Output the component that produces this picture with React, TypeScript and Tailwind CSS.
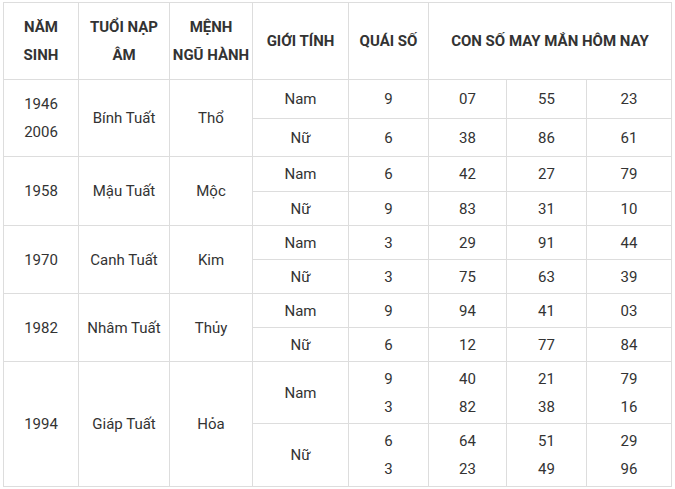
import React from "react";

type Sub = { g: string; q: string[]; n: string[][] };
type Row = { year: string[]; tuoi: string; menh: string; subs: Sub[]; h: string[] };

const rows: Row[] = [
  {
    year: ["1946", "2006"],
    tuoi: "Bính Tuất",
    menh: "Thổ",
    h: ["h-[39px]", "h-[38px]"],
    subs: [
      { g: "Nam", q: ["9"], n: [["07"], ["55"], ["23"]] },
      { g: "Nữ", q: ["6"], n: [["38"], ["86"], ["61"]] },
    ],
  },
  {
    year: ["1958"],
    tuoi: "Mậu Tuất",
    menh: "Mộc",
    h: ["h-[35px]", "h-[34px]"],
    subs: [
      { g: "Nam", q: ["6"], n: [["42"], ["27"], ["79"]] },
      { g: "Nữ", q: ["9"], n: [["83"], ["31"], ["10"]] },
    ],
  },
  {
    year: ["1970"],
    tuoi: "Canh Tuất",
    menh: "Kim",
    h: ["h-[34px]", "h-[34px]"],
    subs: [
      { g: "Nam", q: ["3"], n: [["29"], ["91"], ["44"]] },
      { g: "Nữ", q: ["3"], n: [["75"], ["63"], ["39"]] },
    ],
  },
  {
    year: ["1982"],
    tuoi: "Nhâm Tuất",
    menh: "Thủy",
    h: ["h-[34px]", "h-[34px]"],
    subs: [
      { g: "Nam", q: ["9"], n: [["94"], ["41"], ["03"]] },
      { g: "Nữ", q: ["6"], n: [["12"], ["77"], ["84"]] },
    ],
  },
  {
    year: ["1994"],
    tuoi: "Giáp Tuất",
    menh: "Hỏa",
    h: ["h-[62px]", "h-[63px]"],
    subs: [
      { g: "Nam", q: ["9", "3"], n: [["40", "82"], ["21", "38"], ["79", "16"]] },
      { g: "Nữ", q: ["6", "3"], n: [["64", "23"], ["51", "49"], ["29", "96"]] },
    ],
  },
];

const cell = "border border-[#dddddd] text-center align-middle p-0";

function Lines({ items }: { items: string[] }) {
  return (
    <>
      {items.map((t, i) => (
        <div key={i}>{t}</div>
      ))}
    </>
  );
}

export default function App() {
  return (
    <div className="bg-white w-[675px] h-[489px] pt-[2px] pl-[3px]">
      <table
        className="table-fixed border-collapse w-[668px] text-[#333333] text-[15px] leading-[28px]"
        style={{ fontFamily: "Roboto, 'Noto Sans', sans-serif" }}
      >
        <colgroup>
          <col className="w-[75px]" />
          <col className="w-[91px]" />
          <col className="w-[83px]" />
          <col className="w-[96px]" />
          <col className="w-[80px]" />
          <col className="w-[78px]" />
          <col className="w-[80px]" />
          <col className="w-[85px]" />
        </colgroup>
        <thead>
          <tr className="h-[77px] font-bold">
            <th className={cell}>
              NĂM
              <br />
              SINH
            </th>
            <th className={cell}>
              TUỔI NẠP
              <br />
              ÂM
            </th>
            <th className={cell + " whitespace-nowrap"}>
              MỆNH
              <br />
              NGŨ HÀNH
            </th>
            <th className={cell}>GIỚI TÍNH</th>
            <th className={cell}>QUÁI SỐ</th>
            <th className={cell} colSpan={3}>
              CON SỐ MAY MẮN HÔM NAY
            </th>
          </tr>
        </thead>
        <tbody>
          {rows.map((r) =>
            r.subs.map((s, si) => (
              <tr key={r.tuoi + si} className={r.h[si]}>
                {si === 0 && (
                  <>
                    <td className={cell} rowSpan={2}>
                      <Lines items={r.year} />
                    </td>
                    <td className={cell} rowSpan={2}>
                      {r.tuoi}
                    </td>
                    <td className={cell} rowSpan={2}>
                      {r.menh}
                    </td>
                  </>
                )}
                <td className={cell}>{s.g}</td>
                <td className={cell}>
                  <Lines items={s.q} />
                </td>
                {s.n.map((col, ci) => (
                  <td key={ci} className={cell}>
                    <Lines items={col} />
                  </td>
                ))}
              </tr>
            ))
          )}
        </tbody>
      </table>
    </div>
  );
}
